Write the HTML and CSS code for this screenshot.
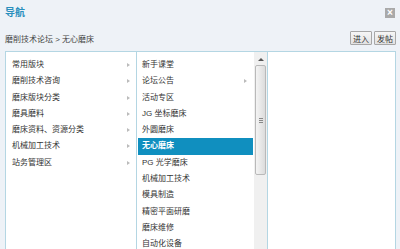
FILE: index.html
```html
<!DOCTYPE html>
<html>
<head>
  <title>导航</title>
  <link rel="stylesheet" href="styles.css">
</head>
<body>
  <div class="header">
    <h3 class="title">导航</h3>
    <span class="close">×</span>
  </div>
  <div class="crumbs">
    <span class="path">磨削技术论坛 &gt; 无心磨床</span>
    <div class="actions">
      <button class="btn">进入</button>
      <button class="btn">发帖</button>
    </div>
  </div>
  <div class="panel">
    <ul class="col col-main">
      <li class="sub">常用版块</li>
      <li class="sub">磨削技术咨询</li>
      <li class="sub">磨床版块分类</li>
      <li class="sub">磨具磨料</li>
      <li class="sub">磨床资料、资源分类</li>
      <li class="sub">机械加工技术</li>
      <li class="sub">站务管理区</li>
    </ul>
    <div class="col-wrap">
      <ul class="col col-forums">
        <li>新手课堂</li>
        <li class="sub">论坛公告</li>
        <li>活动专区</li>
        <li>JG 坐标磨床</li>
        <li>外圆磨床</li>
        <li class="active">无心磨床</li>
        <li>PG 光学磨床</li>
        <li>机械加工技术</li>
        <li>模具制造</li>
        <li>精密平面研磨</li>
        <li>磨床维修</li>
        <li>自动化设备</li>
      </ul>
      <div class="scrollbar">
        <span class="arrow"></span>
        <span class="thumb"><i></i></span>
      </div>
    </div>
    <ul class="col col-sub"></ul>
  </div>
</body>
</html>
```

FILE: styles.css
```css
body {
  margin: 0;
  padding: 8px 4px 0 5px;
  height: 249px;
  box-sizing: border-box;
  overflow: hidden;
  background-color: #eef2f7;
  font-family: "Liberation Sans", "Noto Sans CJK SC", sans-serif;
  font-size: 8px;
  color: #333;
}

.header {
  display: flex;
  justify-content: space-between;
  align-items: center;
  height: 10px;
}

.title {
  margin: 0;
  font-size: 10px;
  line-height: 10px;
  color: #2a8fbd;
}

.close {
  width: 10px;
  height: 10px;
  margin-right: 1px;
  background-color: #a9a9a9;
  color: #fff;
  font-size: 10px;
  font-weight: 700;
  line-height: 10px;
  text-align: center;
}

.crumbs {
  display: flex;
  justify-content: space-between;
  align-items: center;
  margin-top: 13px;
  height: 14px;
}

.path {
  color: #444;
}

.actions {
  display: flex;
  gap: 2px;
}

.btn {
  width: 22px;
  height: 14px;
  padding: 0;
  border: 1px solid #a7a7a7;
  border-radius: 1px;
  background: linear-gradient(#f6f6f6, #e2e2e2);
  font-family: inherit;
  font-size: 8px;
  color: #333;
}

.panel {
  display: flex;
  margin-top: 6px;
  height: 200px;
  border: 1px solid #b4d6e3;
  background-color: #fff;
}

.col {
  list-style: none;
  margin: 0;
  padding: 5px 0 0;
}

.col li {
  position: relative;
  height: 16.3px;
  line-height: 16.3px;
  white-space: nowrap;
}

.col-main {
  width: 130px;
  border-right: 1px solid #b4d6e3;
}

.col-main li {
  padding-left: 6px;
}

.col li.sub::after {
  content: '';
  position: absolute;
  right: 6px;
  top: 6px;
  border-left: 3px solid #bbb;
  border-top: 2.5px solid transparent;
  border-bottom: 2.5px solid transparent;
}

.col-wrap {
  display: flex;
  width: 130px;
  border-right: 1px solid #b4d6e3;
}

.col-forums {
  width: 117px;
}

.col-forums li {
  margin: 0 1px;
  padding-left: 4px;
}

.col-forums li.active {
  background-color: #108fbf;
  color: #fff;
  font-weight: 700;
}

.scrollbar {
  display: flex;
  flex-direction: column;
  align-items: center;
  width: 13px;
  background-color: #f0f0f0;
}

.arrow {
  margin-top: 6px;
  border-bottom: 3px solid #555;
  border-left: 3px solid transparent;
  border-right: 3px solid transparent;
}

.thumb {
  display: flex;
  align-items: center;
  justify-content: center;
  margin-top: 4px;
  width: 9px;
  height: 108px;
  border: 1px solid #b9b9b9;
  border-radius: 2px;
  background: linear-gradient(to right, #f4f4f4, #dcdcdc);
}

.thumb i {
  width: 4px;
  height: 5px;
  background: repeating-linear-gradient(#888 0 1px, transparent 1px 2px);
}

.col-sub {
  flex: 1;
}
```
